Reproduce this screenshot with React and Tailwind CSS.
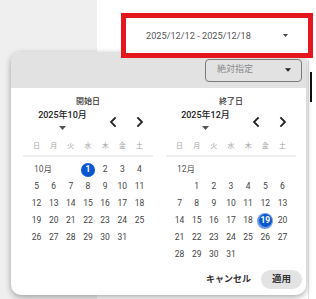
import React from "react";

const WEEK = ["日", "月", "火", "水", "木", "金", "土"];

function Chevron({ dir }) {
  return (
    <svg width="8" height="10" viewBox="0 0 8 10" className="block">
      <path
        d={dir === "left" ? "M6 1 L2 5 L6 9" : "M2 1 L6 5 L2 9"}
        fill="none"
        stroke="#222"
        strokeWidth="1.8"
        strokeLinecap="square"
      />
    </svg>
  );
}

function Caret({ color = "#333", w = 7, h = 4 }) {
  return (
    <svg width={w} height={h} viewBox="0 0 7 4" className="block">
      <path d="M0 0 L7 0 L3.5 4 Z" fill={color} />
    </svg>
  );
}

function Calendar({ title, month, rows }) {
  return (
    <div className="w-[130px] flex flex-col px-[5px]">
      <div className="h-[12px] mt-[8px] flex items-center justify-center text-[8px] font-medium text-[#333]">
        {title}
      </div>
      <div className="h-[24px] flex">
        <div className="w-[60px] pl-[9px] flex flex-col items-center pt-[2px]">
          <div className="h-[12px] flex items-center text-[9px] font-medium text-[#222] whitespace-nowrap">
            {month}
          </div>
          <div className="mt-[4px]">
            <Caret color="#555" />
          </div>
        </div>
        <div className="flex items-center pt-[4px] ml-[21px] gap-[19px]">
          <Chevron dir="left" />
          <Chevron dir="right" />
        </div>
      </div>
      <div className="grid grid-cols-7 h-[12px] mt-[8px]">
        {WEEK.map((w) => (
          <div key={w} className="flex items-center justify-center text-[7px] text-[#a5a5a5]">
            {w}
          </div>
        ))}
      </div>
      <div className="h-[2px] bg-[#eeeeee] mt-[3px] -mx-[5px]" />
      <div className="grid grid-cols-7 mt-[4px]">
        {rows.map((cell, i) => {
          if (cell.label) {
            return (
              <div
                key={i}
                className={`h-[17px] flex items-center pl-[6px] text-[8.5px] text-[#555] ${
                  cell.span === 3 ? "col-span-3" : "col-span-7"
                }`}
              >
                {cell.label}
              </div>
            );
          }
          if (cell.empty) return <div key={i} className="h-[17px]" />;
          if (cell.sel === 1) {
            return (
              <div key={i} className="h-[17px] flex items-center justify-center">
                <div className="w-[14px] h-[14px] rounded-full bg-[#0b57d0] text-white font-bold text-[8.5px] flex items-center justify-center">
                  {cell.d}
                </div>
              </div>
            );
          }
          if (cell.sel === 2) {
            return (
              <div key={i} className="h-[17px] flex items-center justify-center">
                <div className="w-[16px] h-[16px] rounded-full bg-[#6f9ce8] flex items-center justify-center">
                  <div className="w-[13px] h-[13px] rounded-full bg-[#0b57d0] text-white font-bold text-[8.5px] flex items-center justify-center">
                    {cell.d}
                  </div>
                </div>
              </div>
            );
          }
          return (
            <div key={i} className="h-[17px] flex items-center justify-center text-[8.5px] text-[#444]">
              {cell.d}
            </div>
          );
        })}
      </div>
    </div>
  );
}

function days(from, to, selDay, selType) {
  const out = [];
  for (let d = from; d <= to; d++) {
    out.push(d === selDay ? { d, sel: selType } : { d });
  }
  return out;
}

export default function App() {
  const octRows = [{ label: "10月", span: 3 }, ...days(1, 31, 1, 1)];
  const decRows = [{ label: "12月", span: 7 }, { empty: true }, ...days(1, 31, 19, 2)];

  return (
    <div className="w-[316px] h-[299px] relative overflow-hidden flex bg-white font-[Roboto,'Noto_Sans_CJK_JP',sans-serif]">
      <div className="w-[97px] shrink-0 bg-[#efefef]" />
      <div className="flex-1 flex">
        <div className="w-[211px] shrink-0 pt-[13px] pl-[24px]">
          <div className="relative z-20 w-[192px] h-[45px] border-[5px] border-[#e5161d] bg-white flex items-center pl-[20px]">
            <span className="text-[9.2px] text-[#555] whitespace-nowrap">
              2025/12/12 - 2025/12/18
            </span>
            <span className="ml-[32px]">
              <Caret color="#444" w={5} h={3} />
            </span>
          </div>
        </div>
        <div className="w-[1px] mt-[60px] bg-[#e2e2e2]" />
        <div className="w-[7px] flex flex-col">
          <div className="h-[72px]" />
          <div className="ml-[1px] w-[2px] h-[30px] bg-[#111]" />
        </div>
      </div>

      <div className="absolute left-[11px] top-[52px] w-[295px] h-[243px] rounded-[10px] bg-white shadow-[0_2px_6px_rgba(0,0,0,0.35)] overflow-hidden flex flex-col z-10">
        <div className="h-[36px] shrink-0 bg-[#e2e2e2] flex items-center justify-end pr-[4px]">
          <div className="w-[97px] h-[23px] border border-[#7a7a7a] rounded-[4px] flex items-center justify-between pl-[11px] pr-[10px]">
            <span className="text-[9px] text-[#8a8a8a]">絶対指定</span>
            <Caret color="#222" w={6} h={4} />
          </div>
        </div>
        <div className="flex pl-[12px] gap-[13px]">
          <Calendar title="開始日" month="2025年10月" rows={octRows} />
          <Calendar title="終了日" month="2025年12月" rows={decRows} />
        </div>
        <div className="mt-auto mb-[6px] h-[19px] flex items-center justify-end pr-[4px]">
          <span className="text-[9px] font-bold text-[#333] mr-[10px]">キャンセル</span>
          <div className="w-[41px] h-[19px] rounded-full bg-[#e3e3e3] flex items-center justify-center text-[9.5px] font-bold text-[#333]">
            適用
          </div>
        </div>
      </div>
    </div>
  );
}
